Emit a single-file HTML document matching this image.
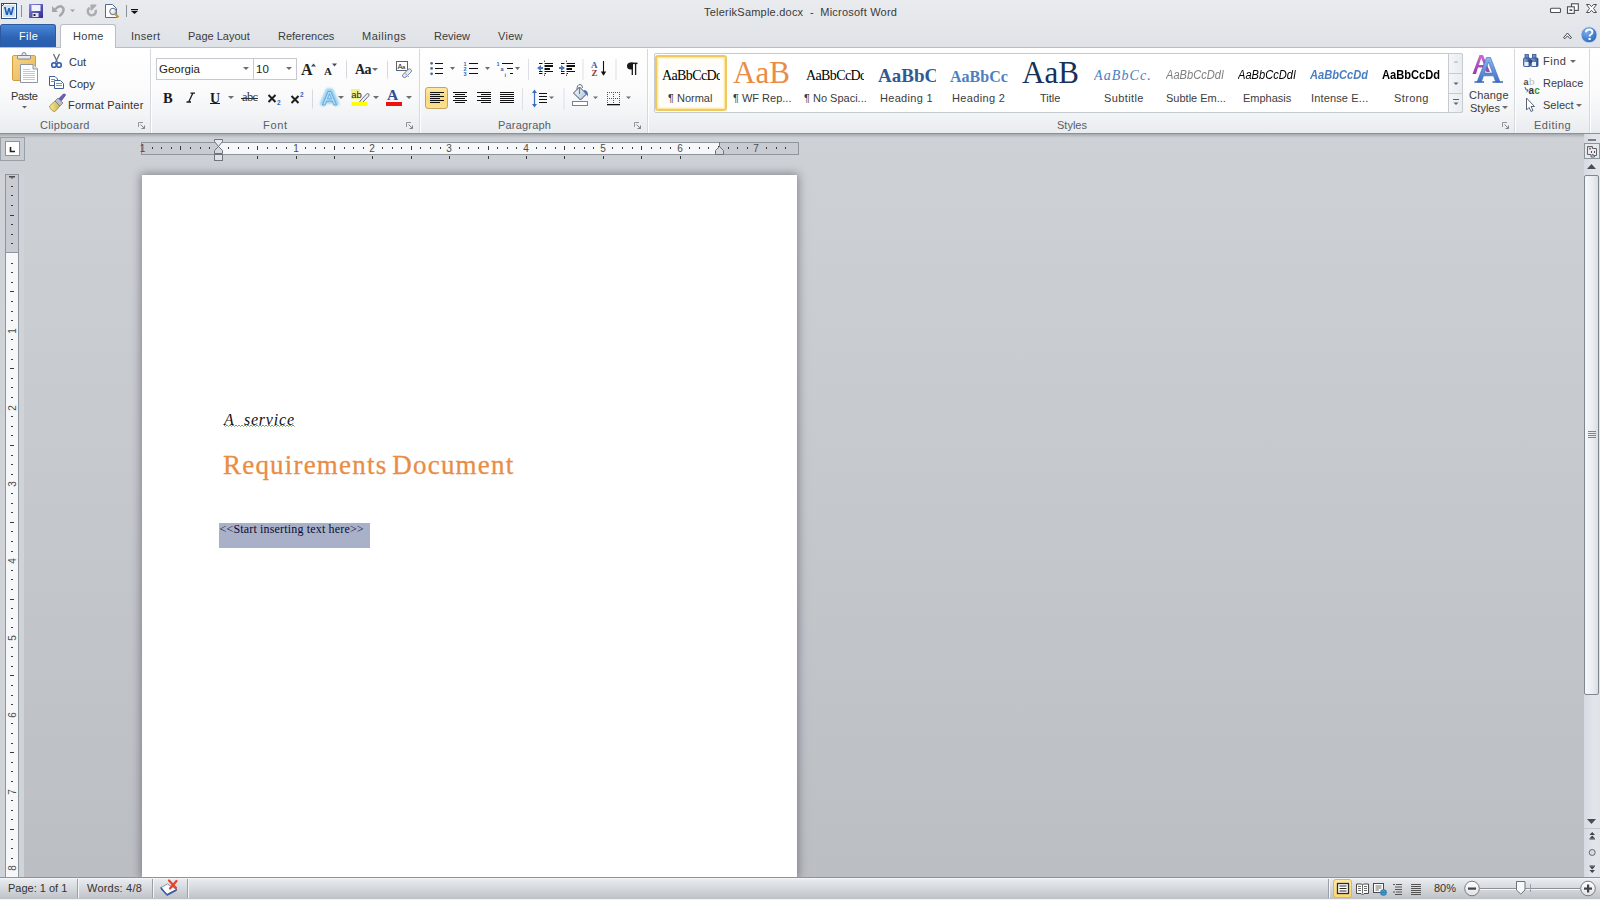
<!DOCTYPE html>
<html><head><meta charset="utf-8">
<style>
*{margin:0;padding:0;box-sizing:border-box}
html,body{width:1600px;height:900px;overflow:hidden;font-family:"Liberation Sans",sans-serif;font-size:11px;color:#3c3c3c;background:#c5c8cd}
.a{position:absolute}
svg{position:absolute;overflow:visible}
.t{position:absolute;white-space:pre;font-size:11px;line-height:13px;color:#3c3c3c}
#title{left:0;top:0;width:1600px;height:47px;background:linear-gradient(#e9ebef,#dfe2e6)}
#ribbon{left:0;top:47px;width:1600px;height:87px;background:linear-gradient(#ffffff 0%,#fbfbfc 50%,#f1f3f5 80%,#e9ecef 100%);border-top:1px solid #b9bec5;border-bottom:1px solid #8c9199;box-shadow:0 1px 0 #aeb3ba}
#doc{left:0;top:134px;width:1584px;height:744px;background:linear-gradient(#ced1d6,#bbbec3)}
#status{left:0;top:877px;width:1600px;height:23px;background:linear-gradient(#f5f7fa 0px,#e7e9ed 2px,#d4d7db 11px,#c0c3c7 20px,#bfc2c6 21px,#f2f3f4 21px);border-top:1px solid #8f949b}
#page{left:142px;top:175px;width:655px;height:703px;background:#fff;box-shadow:0 0 9px 1px rgba(60,65,75,.55)}
#vscroll{left:1584px;top:134px;width:16px;height:744px;background:#dde1e6}
.tab{top:24px;height:23px}
.sep{position:absolute;width:1px;background:linear-gradient(rgba(200,204,210,0),#d5d9de 15%,#d5d9de 85%,rgba(200,204,210,0))}
.gsep{position:absolute;top:49px;height:84px;width:2px;border-left:1px solid #d5d9de;border-right:1px solid #ffffff}
.lbl{position:absolute;white-space:pre;font-size:11px;line-height:13px;color:#575d69}
.dd{position:absolute;width:0;height:0;border-left:3px solid transparent;border-right:3px solid transparent;border-top:3px solid #6d6d6d}
.pv{position:absolute;white-space:pre;overflow:hidden;line-height:18px}
</style></head><body>
<!-- TITLE BAR -->
<div id="title" class="a"></div>
<div class="t" style="left:704px;top:6px;color:#3a3a3a;letter-spacing:0.22px">TelerikSample.docx  -  Microsoft Word</div>
<!-- QAT -->
<svg style="left:0;top:0" width="150" height="24">
 <rect x="1.5" y="3.5" width="15" height="15" fill="#fff" stroke="#2b4c7e"/>
 <path d="M1.5 6.5 L4.5 3.5" stroke="#2b4c7e" fill="none"/>
 <rect x="3" y="5" width="12" height="12" fill="#cfe0f5"/>
 <path d="M4 7 L6 15 L8 15 L9 10.5 L10 15 L12 15 L14 7 L12.3 7 L11 12.5 L9.8 8 L8.2 8 L7 12.5 L5.7 7 Z" fill="#1a5fb4"/>
 <rect x="21" y="5" width="1" height="12" fill="#8d9299"/>
 <rect x="29" y="4" width="14" height="14" fill="#4a48b8"/>
 <rect x="29" y="4" width="14" height="14" fill="url(#sv)"/>
 <rect x="31.5" y="5" width="9" height="6" fill="#f2f4fb"/>
 <rect x="32.5" y="13" width="6" height="4" fill="#e8e8f4"/>
 <rect x="33.5" y="14" width="2" height="2" fill="#222"/>
 <defs><linearGradient id="sv" x1="0" y1="0" x2="1" y2="1"><stop offset="0" stop-color="#8a88e0"/><stop offset="1" stop-color="#2f2a90"/></linearGradient>
 <radialGradient id="mg" cx=".4" cy=".35" r=".6"><stop offset="0" stop-color="#fff"/><stop offset="1" stop-color="#c9d3e3"/></radialGradient></defs>
 <path d="M52 6 L52 12 L58 12 Z" fill="#a3a6ab"/><path d="M55 9.5 Q58.5 5.5 61.5 6.5 Q64.5 8 63.2 11.5 Q62 14.5 59.3 16.3" fill="none" stroke="#a3a6ab" stroke-width="2.4"/>
 <path d="M70 9.5 L75 9.5 L72.5 12 Z" fill="#9a9ea5"/>
 <path d="M89.80 7.84 A4.0 4.0 0 1 0 95.56 9.93" fill="none" stroke="#a9acb1" stroke-width="2.5"/>
 <path d="M90.5 4.6 L96.3 4.6 L96.3 5.8 L91.7 10.4 L90.5 10.4 Z" fill="#a9acb1"/>
 <path d="M105.5 4.5 L112.5 4.5 L116.5 8.5 L116.5 17.5 L105.5 17.5 Z" fill="#fff" stroke="#4e6c90"/>
 <circle cx="113" cy="11.5" r="3.3" fill="url(#mg)" stroke="#6b7480" stroke-width="1"/>
 <path d="M115.2 14 L118.5 17.3" stroke="#c79a3c" stroke-width="2.4"/>
 <rect x="126" y="5" width="1" height="12" fill="#8d9299"/>
 <rect x="131" y="9" width="7" height="1.2" fill="#111"/>
 <path d="M131 11 L138 11 L134.5 14 Z" fill="#111"/>
</svg>
<!-- WINDOW CONTROLS -->
<svg style="left:1540px;top:0" width="60" height="48">
 <rect x="10.5" y="8.3" width="10" height="4.2" rx="1" fill="#fff" stroke="#4b4f56" stroke-width="1.1"/>
 <rect x="31.5" y="3.8" width="6.8" height="6.6" fill="#fff" stroke="#4b4f56" stroke-width="1.1"/>
 <rect x="27.5" y="6.8" width="6.8" height="6.6" fill="#fff" stroke="#4b4f56" stroke-width="1.1"/>
 <rect x="29.5" y="9.3" width="2.8" height="1.6" fill="#4b4f56"/>
 <path d="M46.5 4.5 L49.5 4.5 L51.5 6.7 L53.5 4.5 L56.5 4.5 L53.5 8.5 L56.5 12.5 L53.5 12.5 L51.5 10.3 L49.5 12.5 L46.5 12.5 L49.5 8.5 Z" fill="#fff" stroke="#4b4f56" stroke-width="1" stroke-linejoin="round"/>
 <path d="M23.5 37.7 L27.5 33 L31.5 37.7 L30 38.7 L27.5 35.8 L25 38.7 Z" fill="#fff" stroke="#3f434a" stroke-width="1" stroke-linejoin="round"/>
 <defs><radialGradient id="hg" cx=".35" cy=".3" r=".75"><stop offset="0" stop-color="#7fb0ea"/><stop offset="1" stop-color="#2a66bd"/></radialGradient></defs>
 <circle cx="49" cy="34.8" r="8" fill="url(#hg)" stroke="#d8e6f7" stroke-width="0.8"/>
 <path d="M46 32.3 Q46 29.5 49.2 29.5 Q52.4 29.5 52.4 32.2 Q52.4 34 50.3 35 Q49.6 35.4 49.6 36.6" fill="none" stroke="#fff" stroke-width="1.9"/>
 <rect x="48.5" y="38" width="2.2" height="2" fill="#fff"/>
</svg>

<!-- TABS -->
<div class="a tab" style="left:0;width:56px;background:linear-gradient(#4a87d6,#2c62b4 60%,#2a5dab);border:1px solid #2c5aa0;border-bottom:none;border-radius:3px 3px 0 0"></div>
<div class="t" style="left:19px;top:30px;color:#fff;letter-spacing:0.4px">File</div>
<div class="a tab" style="left:60px;width:56px;background:linear-gradient(#fdfdfd,#ffffff);border:1px solid #b9bec5;border-bottom:none;border-radius:3px 3px 0 0;height:24px"></div>
<div class="t" style="left:73px;top:30px;letter-spacing:0.35px">Home</div>
<div class="t" style="left:131px;top:30px;letter-spacing:0.3px">Insert</div>
<div class="t" style="left:188px;top:30px">Page Layout</div>
<div class="t" style="left:278px;top:30px">References</div>
<div class="t" style="left:362px;top:30px;letter-spacing:0.5px">Mailings</div>
<div class="t" style="left:434px;top:30px">Review</div>
<div class="t" style="left:498px;top:30px;letter-spacing:0.3px">View</div>

<!-- RIBBON -->
<div id="ribbon" class="a"></div>
<div class="a" style="left:61px;top:46px;width:54px;height:2px;background:#fff"></div>
<div class="gsep" style="left:150px"></div>
<div class="gsep" style="left:419px"></div>
<div class="gsep" style="left:647px"></div>
<div class="gsep" style="left:1514px"></div>
<div class="gsep" style="left:1589px"></div>
<div class="lbl" style="left:40px;top:119px;letter-spacing:0.3px">Clipboard</div>
<div class="lbl" style="left:263px;top:119px;letter-spacing:0.7px">Font</div>
<div class="lbl" style="left:498px;top:119px;letter-spacing:0.2px">Paragraph</div>
<div class="lbl" style="left:1057px;top:119px">Styles</div>
<div class="lbl" style="left:1534px;top:119px;letter-spacing:0.5px">Editing</div>


<!-- CLIPBOARD GROUP -->
<svg style="left:0;top:47px" width="150" height="87">
 <defs>
  <linearGradient id="cbg" x1="0" y1="0" x2="1" y2="1"><stop offset="0" stop-color="#f7d58c"/><stop offset="1" stop-color="#e9b551"/></linearGradient>
  <linearGradient id="brs" x1="0" y1="0" x2="1" y2="0"><stop offset="0" stop-color="#f4ec9a"/><stop offset="1" stop-color="#c9b04c"/></linearGradient>
 </defs>
 <rect x="12.5" y="8.5" width="23" height="25" rx="1.5" fill="url(#cbg)" stroke="#d19e3c"/>
 <circle cx="24" cy="7.5" r="2" fill="#e9ebee" stroke="#7d848c"/>
 <rect x="17.5" y="8.5" width="13" height="3.5" rx="1" fill="#e9ebee" stroke="#7d848c"/>
 <path d="M20.5 17.5 L33 17.5 L37.5 22 L37.5 35.5 L20.5 35.5 Z" fill="#fff" stroke="#8f959c"/>
 <path d="M33 17.5 L33 22 L37.5 22" fill="#e4e7eb" stroke="#8f959c"/>
 <g stroke="#c5c9ce" stroke-width="1"><path d="M23 22.5 H30 M23 24.5 H35 M23 26.5 H35 M23 28.5 H35 M23 30.5 H35 M23 32.5 H35"/></g>
 <path d="M22 59 L27 59 L24.5 61.5 Z" fill="#5f6368"/>
 <!-- scissors -->
 <path d="M53.5 7 L57.5 15.5 M59.5 7 L55.5 15.5" stroke="#6a6f76" stroke-width="1.3"/>
 <circle cx="54" cy="18" r="2.3" fill="none" stroke="#2f5fb3" stroke-width="1.6"/>
 <circle cx="59" cy="18" r="2.3" fill="none" stroke="#2f5fb3" stroke-width="1.6"/>
 <!-- copy -->
 <path d="M49.5 29.5 L55 29.5 L57.5 32 L57.5 38.5 L49.5 38.5 Z" fill="#fff" stroke="#3e5f95"/>
 <path d="M54.5 33.5 L60.5 33.5 L63.5 36.5 L63.5 41.5 L54.5 41.5 Z" fill="#fff" stroke="#3e5f95"/>
 <path d="M51 32.5 H55 M51 34.5 H55 M56 36.5 H62 M56 38.5 H62" stroke="#6f93cc"/>
 <!-- format painter -->
 <path d="M49.5 59 L55 54 L60 59 L55 64.5 Q53 64.5 51.5 63 Q50 61.5 49.5 59 Z" fill="url(#brs)" stroke="#a08c3a" stroke-width="0.8"/>
 <path d="M55 54 L58 51 L63 56 L60 59 Z" fill="#b9bfca" stroke="#6b6f7a" stroke-width="0.7"/>
 <path d="M59 51.5 L63.5 47 Q65 46.5 65.5 48 L61.5 53.5 Z" fill="#6a62b8" stroke="#4a4290" stroke-width="0.8"/>
</svg>
<div class="t" style="left:11px;top:90px;color:#333;letter-spacing:-0.3px">Paste</div>
<div class="t" style="left:69px;top:56px;color:#333">Cut</div>
<div class="t" style="left:69px;top:78px;color:#333">Copy</div>
<div class="t" style="left:68px;top:99px;color:#333;letter-spacing:0.2px">Format Painter</div>
<svg style="left:138px;top:122px" width="8" height="8"><path d="M0.5 0.5 H5 M0.5 0.5 V5" stroke="#8f949b" fill="none"/><path d="M2.5 2.5 L6.5 6.5 M6.5 3.5 V6.5 H3.5" stroke="#7f848b" fill="none"/></svg>


<!-- FONT GROUP -->
<div class="a" style="left:156px;top:58px;width:98px;height:22px;background:#fff;border:1px solid #c6cacf"></div>
<div class="a" style="left:253px;top:58px;width:44px;height:22px;background:#fff;border:1px solid #c6cacf"></div>
<div class="t" style="left:159px;top:63px;color:#222;font-size:11.5px">Georgia</div>
<div class="t" style="left:256px;top:63px;color:#222;font-size:11.5px">10</div>
<div class="dd" style="left:243px;top:67px"></div>
<div class="dd" style="left:286px;top:67px"></div>
<div class="a" style="left:301px;top:61px;font-family:'Liberation Serif';font-weight:bold;font-size:16px;line-height:18px;color:#222">A</div>
<svg style="left:310px;top:63px" width="8" height="4"><path d="M1 3.5 L3.5 0.5 L6 3.5 Z" fill="#3c4a6e"/></svg>
<div class="a" style="left:324px;top:65px;font-family:'Liberation Serif';font-weight:bold;font-size:11px;line-height:13px;color:#222">A</div>
<svg style="left:331px;top:63px" width="8" height="5"><path d="M1 0.5 L6 0.5 L3.5 3.5 Z" fill="#3c4a6e"/></svg>
<div class="sep" style="left:346px;top:59px;height:21px"></div>
<div class="a" style="left:355px;top:62px;font-family:'Liberation Serif';font-weight:bold;font-size:14px;line-height:16px;color:#222;letter-spacing:-0.5px">Aa</div>
<div class="dd" style="left:372px;top:68px"></div>
<div class="sep" style="left:387px;top:59px;height:21px"></div>
<svg style="left:395px;top:60px" width="20" height="20">
 <rect x="1.5" y="1.5" width="11" height="9" fill="#fff" stroke="#5a6270"/>
 <text x="2.6" y="9" font-family="Liberation Sans" font-size="7.5" fill="#222">A</text><text x="7" y="9" font-family="Liberation Sans" font-size="6" fill="#222">a</text>
 <path d="M8 14.5 L13 9.5 Q14.8 8.2 16 9.5 Q17.2 10.8 16 12.2 L11 17 Q9.2 18.2 8 17 Q6.8 15.8 8 14.5 Z" fill="#e4e9f1" stroke="#7a8595"/>
 <path d="M9.5 13 L14 17" stroke="#9aa4b3"/>
</svg>
<!-- row 2 -->
<div class="a" style="left:163px;top:90px;font-family:'Liberation Serif';font-weight:bold;font-size:14.5px;line-height:17px;color:#1a1a1a">B</div>
<svg style="left:185px;top:92px" width="12" height="12"><path d="M5.5 1.2 H10 M1.5 10 H6 M7.8 1.2 L3.7 10" stroke="#1a1a1a" stroke-width="1.3" fill="none"/></svg>
<div class="a" style="left:210px;top:89.5px;font-family:'Liberation Serif';font-weight:bold;font-size:14px;line-height:17px;color:#1a1a1a">U</div>
<div class="a" style="left:210px;top:103px;width:10px;height:1px;background:#1a1a1a"></div>
<div class="dd" style="left:228px;top:96px"></div>
<div class="a" style="left:242px;top:90px;font-family:'Liberation Serif';font-size:12.5px;line-height:14px;color:#333;letter-spacing:-0.6px">abc</div>
<div class="a" style="left:241px;top:98px;width:17px;height:1px;background:#333"></div>
<svg style="left:266px;top:92px" width="18" height="14"><path d="M2.5 3 L9.5 10 M9.5 3 L2.5 10" stroke="#1e1e1e" stroke-width="2"/><text x="11" y="12.5" font-family="Liberation Sans" font-weight="bold" font-size="6.5" fill="#3d63b8">2</text></svg>
<svg style="left:289px;top:91px" width="18" height="14"><path d="M2.5 5 L9.5 12 M9.5 5 L2.5 12" stroke="#1e1e1e" stroke-width="2"/><text x="11" y="6" font-family="Liberation Sans" font-weight="bold" font-size="6.5" fill="#3d63b8">2</text></svg>
<div class="sep" style="left:312px;top:88px;height:22px"></div>
<svg style="left:318px;top:87px" width="22" height="22">
 <defs><filter id="glw" x="-50%" y="-50%" width="200%" height="200%"><feGaussianBlur stdDeviation="1.2"/></filter></defs>
 <path d="M4 18.5 L10 4 L13 4 L19 18.5 M8 14 H15" fill="none" stroke="#8fd0f0" stroke-width="5" filter="url(#glw)"/>
 <path d="M4.5 18 L10.2 4.5 L12.8 4.5 L18.5 18 L15.8 18 L14.3 14 L8.7 14 L7.2 18 Z M9.5 11.8 L13.5 11.8 L11.5 6.8 Z" fill="#b5def4" stroke="#5a9ad4" stroke-width="0.8"/>
</svg>
<div class="dd" style="left:338px;top:96px"></div>
<svg style="left:350px;top:88px" width="20" height="20">
 <rect x="1" y="1" width="9" height="10" fill="#f1f18a"/>
 <text x="1.2" y="9.5" font-family="Liberation Sans" font-size="9.5" fill="#222">ab</text>
 <path d="M10 13 L16.5 6 Q17.8 5 18.8 6 Q19.6 7 18.6 8.2 L12 15 L9.5 15.5 Z" fill="#e4ebf5" stroke="#59657a" stroke-width="0.9"/>
 <rect x="1.5" y="14" width="16" height="4" fill="#ffff00"/>
</svg>
<div class="dd" style="left:373px;top:96px"></div>
<div class="a" style="left:387px;top:86px;font-family:'Liberation Serif';font-weight:bold;font-size:15.5px;line-height:17px;color:#2d4f93">A</div>
<div class="a" style="left:386px;top:102px;width:16px;height:4px;background:#ee1111"></div>
<div class="dd" style="left:406px;top:96px"></div>
<svg style="left:406px;top:122px" width="8" height="8"><path d="M0.5 0.5 H5 M0.5 0.5 V5" stroke="#8f949b" fill="none"/><path d="M2.5 2.5 L6.5 6.5 M6.5 3.5 V6.5 H3.5" stroke="#7f848b" fill="none"/></svg>


<!-- PARAGRAPH GROUP -->
<svg style="left:420px;top:47px" width="228" height="87">
 <defs>
  <linearGradient id="selg" x1="0" y1="0" x2="0" y2="1"><stop offset="0" stop-color="#fde9a6"/><stop offset="0.5" stop-color="#fcd97c"/><stop offset="1" stop-color="#fce08e"/></linearGradient>
 </defs>
 <!-- bullets -->
 <g fill="#4e6a9c"><circle cx="11.6" cy="16.3" r="1.4"/><circle cx="11.6" cy="21.4" r="1.4"/><circle cx="11.6" cy="26.8" r="1.4"/></g>
 <path d="M15 16.5 H23 M15 21.5 H23 M15 26.5 H23" stroke="#111" stroke-width="1.2"/>
 <path d="M30 20 L35 20 L32.5 23 Z" fill="#6d6d6d"/>
 <!-- numbering -->
 <g font-family="Liberation Sans" font-weight="bold" font-size="5.5" fill="#3d63b8"><text x="43.5" y="19">1</text><text x="43.5" y="24">2</text><text x="43.5" y="29">3</text></g>
 <path d="M49 16.5 H58 M49 21.5 H58 M49 26.5 H58" stroke="#111" stroke-width="1.2"/>
 <path d="M65 20 L70 20 L67.5 23 Z" fill="#6d6d6d"/>
 <!-- multilevel -->
 <g font-family="Liberation Sans" font-weight="bold" font-size="5.5" fill="#3d63b8"><text x="76.5" y="19">1</text><text x="80.5" y="24">a</text><text x="84.5" y="29.5">i</text></g>
 <path d="M82 16.5 H93 M87 21.5 H93 M90 26.5 H93" stroke="#111" stroke-width="1.2"/>
 <path d="M95 20 L100 20 L97.5 23 Z" fill="#6d6d6d"/>
 <!-- decrease indent -->
 <g stroke="#111"><path d="M119 16.5 H122.5 M119 24.5 H122.5 M119 26.5 H122.5 M124.5 16.5 H133 M124.5 24.5 H133 M124.5 26.5 H126" stroke-width="1"/>
 <path d="M124.5 19 H133 M124.5 22 H130" stroke-width="1.8"/></g>
 <g fill="#111"><rect x="124" y="13.7" width="1" height="1"/><rect x="124" y="27.7" width="1" height="1"/></g>
 <path d="M117 21 L121 18 L121 20 L123 20 L123 22 L121 22 L121 24 Z" fill="#4a78c2"/>
 <!-- increase indent -->
 <g stroke="#111"><path d="M141 16.5 H144.5 M141 24.5 H144.5 M141 26.5 H144.5 M146.5 16.5 H155 M146.5 24.5 H155 M146.5 26.5 H148" stroke-width="1"/>
 <path d="M146.5 19 H155 M146.5 22 H152" stroke-width="1.8"/></g>
 <g fill="#111"><rect x="146" y="13.7" width="1" height="1"/><rect x="146" y="27.7" width="1" height="1"/></g>
 <path d="M145 21 L141 18 L141 20 L139 20 L139 22 L141 22 L141 24 Z" fill="#4a78c2"/>
 <rect x="108" y="12" width="1" height="21" fill="#dcdfe3"/>
 <rect x="162.5" y="12" width="1" height="21" fill="#dcdfe3"/>
 <!-- sort -->
 <text x="171" y="20.5" font-family="Liberation Serif" font-weight="bold" font-size="9" fill="#3a63a8">A</text>
 <text x="171.5" y="28.8" font-family="Liberation Serif" font-weight="bold" font-size="9" fill="#8f3a34">Z</text>
 <path d="M183.5 14 V27.5" stroke="#111" stroke-width="1.1"/>
 <path d="M180.8 24.5 L183.5 28.8 L186.2 24.5 Z" fill="#111"/>
 <rect x="195.5" y="12" width="1" height="21" fill="#dcdfe3"/>
 <!-- pilcrow -->
 <path d="M212.3 16.5 V28 M215.6 16.5 V28" stroke="#1a1a1a" stroke-width="1.3"/>
 <rect x="210.5" y="15.6" width="7" height="1.5" fill="#1a1a1a"/>
 <path d="M212.8 15.6 H210.8 Q207 15.6 207 19.1 Q207 22.6 210.8 22.6 H212.8 Z" fill="#1a1a1a"/>
 <!-- align row -->
 <rect x="5.5" y="40.5" width="22" height="21" rx="2.5" fill="url(#selg)" stroke="#c4a463"/>
 <path d="M10 45.5 H24 M10 47.5 H20 M10 49.5 H24 M10 51.5 H20 M10 53.5 H24 M10 55.5 H20" stroke="#111" stroke-width="1"/>
 <path d="M33 45.5 H47 M35 47.5 H45 M33 49.5 H47 M35 51.5 H45 M33 53.5 H47 M35 55.5 H45" stroke="#111" stroke-width="1"/>
 <path d="M57 45.5 H71 M61 47.5 H71 M57 49.5 H71 M61 51.5 H71 M57 53.5 H71 M61 55.5 H71" stroke="#111" stroke-width="1"/>
 <path d="M80 45.5 H94 M80 47.5 H94 M80 49.5 H94 M80 51.5 H94 M80 53.5 H94 M80 55.5 H94" stroke="#111" stroke-width="1"/>
 <rect x="102" y="41" width="1" height="22" fill="#dcdfe3"/>
 <!-- line spacing -->
 <path d="M114.5 45 V58" stroke="#3a6cc0" stroke-width="1.2"/>
 <path d="M112 46 L114.5 42.5 L117 46 Z M112 57 L114.5 60.5 L117 57 Z" fill="#3a6cc0"/>
 <path d="M119 46.5 H127 M119 49.5 H127 M119 52.5 H127 M119 55.5 H127" stroke="#111" stroke-width="1.2"/>
 <path d="M129 49.5 L134 49.5 L131.5 52 Z" fill="#6d6d6d"/>
 <rect x="143.5" y="41" width="1" height="22" fill="#dcdfe3"/>
 <!-- shading -->
 <defs><linearGradient id="bk" x1="0" y1="0" x2="1" y2="1"><stop offset="0" stop-color="#ffffff"/><stop offset="1" stop-color="#a9bfdf"/></linearGradient></defs>
 <rect x="152.5" y="54.5" width="15" height="4" fill="#fff" stroke="#7d8289"/>
 <path d="M153.5 46 L159.5 40 L166.5 47 L160.5 53 Z" fill="url(#bk)" stroke="#3e4d66" stroke-width="1"/>
 <path d="M159.5 41 V47" stroke="#3e9a7a" stroke-width="1.2"/>
 <path d="M157 42.5 Q157 37.5 160 37.5 Q162.5 37.5 162.5 41" fill="none" stroke="#556070" stroke-width="0.9"/>
 <path d="M163.5 43 Q168.5 42.5 168 50 Q167 47 165.5 46.5 Z" fill="#3f6fc0"/>
 <path d="M173 49.5 L178 49.5 L175.5 52 Z" fill="#6d6d6d"/>
 <!-- borders -->
 <g fill="#555"><rect x="187" y="45" width="1" height="1"/><rect x="189" y="45" width="1" height="1"/><rect x="191" y="45" width="1" height="1"/><rect x="193" y="45" width="1" height="1"/><rect x="195" y="45" width="1" height="1"/><rect x="197" y="45" width="1" height="1"/><rect x="199" y="45" width="1" height="1"/>
 <rect x="187" y="47" width="1" height="1"/><rect x="187" y="49" width="1" height="1"/><rect x="187" y="51" width="1" height="1"/><rect x="187" y="53" width="1" height="1"/><rect x="187" y="55" width="1" height="1"/>
 <rect x="199" y="47" width="1" height="1"/><rect x="199" y="49" width="1" height="1"/><rect x="199" y="51" width="1" height="1"/><rect x="199" y="53" width="1" height="1"/><rect x="199" y="55" width="1" height="1"/>
 <rect x="193" y="47" width="1" height="1"/><rect x="193" y="49" width="1" height="1"/><rect x="193" y="53" width="1" height="1"/><rect x="193" y="55" width="1" height="1"/>
 <rect x="189" y="51" width="1" height="1"/><rect x="191" y="51" width="1" height="1"/><rect x="195" y="51" width="1" height="1"/><rect x="197" y="51" width="1" height="1"/><rect x="193" y="51" width="1" height="1"/></g>
 <rect x="187" y="57" width="13" height="1.3" fill="#111"/>
 <path d="M206 49.5 L211 49.5 L208.5 52 Z" fill="#6d6d6d"/>
</svg>
<svg style="left:634px;top:122px" width="8" height="8"><path d="M0.5 0.5 H5 M0.5 0.5 V5" stroke="#8f949b" fill="none"/><path d="M2.5 2.5 L6.5 6.5 M6.5 3.5 V6.5 H3.5" stroke="#7f848b" fill="none"/></svg>


<!-- STYLES GROUP -->
<div class="a" style="left:654px;top:53px;width:809px;height:60px;background:#fff;border:1px solid #c6cbd2;border-radius:2px"></div>
<div class="a" style="left:655px;top:55px;width:72px;height:56px;border:2px solid #efc960;border-radius:3px;background:#fffefa;box-shadow:inset 0 0 0 1px #fde9a2,inset 0 0 0 2px #fff6d6"></div>
<div class="pv" style="left:662px;top:67px;font-family:'Liberation Serif';font-size:14px;color:#000;width:58px;letter-spacing:-0.6px">AaBbCcDd</div>
<div class="t" style="left:668px;top:92px">¶ Normal</div>
<div class="pv" style="left:733px;top:55px;font-family:'Liberation Serif';font-size:31px;line-height:36px;color:#ea8c45;width:60px">AaB</div>
<div class="t" style="left:733px;top:92px">¶ WF Rep...</div>
<div class="pv" style="left:806px;top:67px;font-family:'Liberation Serif';font-size:14px;color:#000;width:58px;letter-spacing:-0.6px">AaBbCcDd</div>
<div class="t" style="left:804px;top:92px">¶ No Spaci...</div>
<div class="pv" style="left:878px;top:65px;font-family:'Liberation Serif';font-weight:bold;font-size:19px;line-height:22px;color:#2e5b93;width:58px">AaBbCc</div>
<div class="t" style="left:880px;top:92px;letter-spacing:0.3px">Heading 1</div>
<div class="pv" style="left:950px;top:68px;font-family:'Liberation Serif';font-weight:bold;font-size:16px;color:#4c7fc0;width:58px">AaBbCc</div>
<div class="t" style="left:952px;top:92px;letter-spacing:0.35px">Heading 2</div>
<div class="pv" style="left:1022px;top:55px;font-family:'Liberation Serif';font-size:31px;line-height:36px;color:#16325a;width:60px">AaB</div>
<div class="t" style="left:1040px;top:92px">Title</div>
<div class="pv" style="left:1094px;top:67px;font-family:'Liberation Serif';font-style:italic;font-size:14px;color:#4a7ec0;width:58px;letter-spacing:1.1px">AaBbCc.</div>
<div class="t" style="left:1104px;top:92px;letter-spacing:0.4px">Subtitle</div>
<div class="pv" style="left:1166px;top:66px;font-family:'Liberation Sans';font-style:italic;font-size:12.5px;color:#7f7f7f;width:65px;letter-spacing:0px;transform:scaleX(0.89);transform-origin:0 0">AaBbCcDdI</div>
<div class="t" style="left:1166px;top:92px">Subtle Em...</div>
<div class="pv" style="left:1238px;top:66px;font-family:'Liberation Sans';font-style:italic;font-size:12.5px;color:#000;width:65px;letter-spacing:0px;transform:scaleX(0.89);transform-origin:0 0">AaBbCcDdI</div>
<div class="t" style="left:1243px;top:92px">Emphasis</div>
<div class="pv" style="left:1310px;top:66px;font-family:'Liberation Sans';font-style:italic;font-weight:bold;font-size:12.5px;color:#4a7ec0;width:65px;letter-spacing:0px;transform:scaleX(0.89);transform-origin:0 0">AaBbCcDdI</div>
<div class="t" style="left:1311px;top:92px;letter-spacing:0.15px">Intense E...</div>
<div class="pv" style="left:1382px;top:66px;font-family:'Liberation Sans';font-weight:bold;font-size:12.5px;color:#000;width:65px;letter-spacing:0px;transform:scaleX(0.89);transform-origin:0 0">AaBbCcDdE</div>
<div class="t" style="left:1394px;top:92px;letter-spacing:0.4px">Strong</div>
<div class="a" style="left:1448px;top:53px;width:15px;height:60px;background:linear-gradient(90deg,#f4f5f7,#e9ecf0);border:1px solid #c6cbd2;border-radius:0 2px 2px 0"></div>
<div class="a" style="left:1448px;top:73px;width:15px;height:1px;background:#c6cbd2"></div>
<div class="a" style="left:1448px;top:93px;width:15px;height:1px;background:#c6cbd2"></div>
<svg style="left:1447.5px;top:53px" width="16" height="60">
 <path d="M5.5 10 L10.5 10 L8 7.5 Z" fill="#c2c5ca"/>
 <path d="M5.5 29.5 L10.5 29.5 L8 32 Z" fill="#5f6368"/>
 <path d="M5 46.5 H11" stroke="#5f6368"/><path d="M5.5 49.5 L10.5 49.5 L8 52 Z" fill="#5f6368"/>
</svg>
<svg style="left:1466px;top:52px" width="42" height="34">
 <defs><linearGradient id="pa" x1="0" y1="0" x2="0" y2="1"><stop offset="0" stop-color="#c86bd0"/><stop offset="1" stop-color="#9a3aa8"/></linearGradient>
 <linearGradient id="ba" x1="0" y1="0" x2="0" y2="1"><stop offset="0" stop-color="#8ab8f0"/><stop offset="1" stop-color="#3f73c8"/></linearGradient></defs>
 <path d="M6.5 22 L13.5 3 L17 3 L24 20 L20.5 20 L18.8 15.5 L12 15.5 L10 22 Z M12.8 13 L18 13 L15.3 6 Z" fill="url(#pa)"/>
 <path d="M11 30 L20.5 5.5 L24.5 5.5 L34 30 L29.8 30 L27.5 23.8 L17.5 23.8 L15.3 30 Z M18.5 21 L26.5 21 L22.5 10 Z" fill="url(#ba)" stroke="#3a68b5" stroke-width="0.6"/>
 <path d="M8.5 30 H18 M26.5 30 H37" stroke="#3a68b5" stroke-width="1.3"/>
</svg>
<div class="t" style="left:1469px;top:89px;letter-spacing:0.2px">Change</div>
<div class="t" style="left:1470px;top:102px">Styles</div>
<div class="dd" style="left:1502px;top:106px"></div>
<svg style="left:1502px;top:122px" width="8" height="8"><path d="M0.5 0.5 H5 M0.5 0.5 V5" stroke="#8f949b" fill="none"/><path d="M2.5 2.5 L6.5 6.5 M6.5 3.5 V6.5 H3.5" stroke="#7f848b" fill="none"/></svg>


<!-- EDITING GROUP -->
<svg style="left:1520px;top:52px" width="24" height="64">
 <defs><linearGradient id="bino" x1="0" y1="0" x2="1" y2="0"><stop offset="0" stop-color="#8fb0e0"/><stop offset="1" stop-color="#2c4f94"/></linearGradient></defs>
 <rect x="5" y="2.5" width="3.5" height="4" fill="#6b8cc8" stroke="#2d4a85" stroke-width="0.7"/>
 <rect x="12.5" y="2.5" width="3.5" height="4" fill="#6b8cc8" stroke="#2d4a85" stroke-width="0.7"/>
 <rect x="3.5" y="6" width="7" height="8.5" rx="1" fill="url(#bino)" stroke="#2d4a85" stroke-width="0.8"/>
 <rect x="11" y="6" width="7" height="8.5" rx="1" fill="url(#bino)" stroke="#2d4a85" stroke-width="0.8"/>
 <rect x="8.5" y="8" width="4" height="3" fill="#2d4a85"/>
 <rect x="4.5" y="10" width="4" height="4" fill="#e8eef8"/><rect x="12" y="10" width="4" height="4" fill="#e8eef8"/>
 <text x="3.5" y="33" font-family="Liberation Sans" font-weight="bold" font-size="9" fill="#4a4a4a">a</text>
 <text x="9" y="32.5" font-family="Liberation Serif" font-size="11" fill="#b4b7bb">b</text>
 <text x="8.5" y="41.5" font-family="Liberation Sans" font-weight="bold" font-size="10" fill="#333">a</text>
 <text x="14.3" y="41.5" font-family="Liberation Sans" font-weight="bold" font-size="10" fill="#2f9a2f">c</text>
 <path d="M5 35 Q5 38.5 8 38.5" fill="none" stroke="#3d63b8" stroke-width="1"/><path d="M6.5 37 L8.3 38.5 L6.5 40" fill="none" stroke="#3d63b8" stroke-width="1"/>
 <path d="M6.5 46 L6.5 58 L9 55.5 L11 59.5 L13 58.5 L11 54.5 L14.5 54.5 Z" fill="#fff" stroke="#4a5566" stroke-width="0.9" stroke-linejoin="round"/>
</svg>
<div class="t" style="left:1543px;top:55px;letter-spacing:0.5px">Find</div>
<div class="dd" style="left:1570px;top:60px"></div>
<div class="t" style="left:1543px;top:77px">Replace</div>
<div class="t" style="left:1543px;top:99px">Select</div>
<div class="dd" style="left:1576px;top:104px"></div>

<!-- DOC AREA -->
<div id="doc" class="a"></div>
<div class="a" style="left:0;top:134px;width:1600px;height:4px;background:linear-gradient(rgba(150,154,160,.75),rgba(170,174,180,.45) 50%,rgba(200,204,210,0))"></div>
<!-- H RULER -->
<div class="a" style="left:141px;top:142px;width:658px;height:13px;background:#c8ccd2;border:1px solid #8f959d"></div>
<div class="a" style="left:219px;top:143px;width:500px;height:11px;background:#f6f7f8"></div>
<svg style="left:0;top:134px" width="800" height="30">
<rect x="152" y="13" width="1" height="2" fill="#3a3a3a"/>
<rect x="161" y="13" width="1" height="2" fill="#3a3a3a"/>
<rect x="171" y="13" width="1" height="2" fill="#3a3a3a"/>
<rect x="180" y="12" width="1" height="4" fill="#3a3a3a"/>
<rect x="190" y="13" width="1" height="2" fill="#3a3a3a"/>
<rect x="200" y="13" width="1" height="2" fill="#3a3a3a"/>
<rect x="209" y="13" width="1" height="2" fill="#3a3a3a"/>
<rect x="228" y="13" width="1" height="2" fill="#3a3a3a"/>
<rect x="238" y="13" width="1" height="2" fill="#3a3a3a"/>
<rect x="248" y="13" width="1" height="2" fill="#3a3a3a"/>
<rect x="257" y="12" width="1" height="4" fill="#3a3a3a"/>
<rect x="267" y="13" width="1" height="2" fill="#3a3a3a"/>
<rect x="276" y="13" width="1" height="2" fill="#3a3a3a"/>
<rect x="286" y="13" width="1" height="2" fill="#3a3a3a"/>
<text x="296" y="17.5" text-anchor="middle" font-family="Liberation Sans" font-size="10" fill="#4a4a4a">1</text>
<rect x="305" y="13" width="1" height="2" fill="#3a3a3a"/>
<rect x="315" y="13" width="1" height="2" fill="#3a3a3a"/>
<rect x="324" y="13" width="1" height="2" fill="#3a3a3a"/>
<rect x="334" y="12" width="1" height="4" fill="#3a3a3a"/>
<rect x="344" y="13" width="1" height="2" fill="#3a3a3a"/>
<rect x="353" y="13" width="1" height="2" fill="#3a3a3a"/>
<rect x="363" y="13" width="1" height="2" fill="#3a3a3a"/>
<text x="372" y="17.5" text-anchor="middle" font-family="Liberation Sans" font-size="10" fill="#4a4a4a">2</text>
<rect x="382" y="13" width="1" height="2" fill="#3a3a3a"/>
<rect x="392" y="13" width="1" height="2" fill="#3a3a3a"/>
<rect x="401" y="13" width="1" height="2" fill="#3a3a3a"/>
<rect x="411" y="12" width="1" height="4" fill="#3a3a3a"/>
<rect x="420" y="13" width="1" height="2" fill="#3a3a3a"/>
<rect x="430" y="13" width="1" height="2" fill="#3a3a3a"/>
<rect x="440" y="13" width="1" height="2" fill="#3a3a3a"/>
<text x="449" y="17.5" text-anchor="middle" font-family="Liberation Sans" font-size="10" fill="#4a4a4a">3</text>
<rect x="459" y="13" width="1" height="2" fill="#3a3a3a"/>
<rect x="468" y="13" width="1" height="2" fill="#3a3a3a"/>
<rect x="478" y="13" width="1" height="2" fill="#3a3a3a"/>
<rect x="488" y="12" width="1" height="4" fill="#3a3a3a"/>
<rect x="497" y="13" width="1" height="2" fill="#3a3a3a"/>
<rect x="507" y="13" width="1" height="2" fill="#3a3a3a"/>
<rect x="516" y="13" width="1" height="2" fill="#3a3a3a"/>
<text x="526" y="17.5" text-anchor="middle" font-family="Liberation Sans" font-size="10" fill="#4a4a4a">4</text>
<rect x="536" y="13" width="1" height="2" fill="#3a3a3a"/>
<rect x="545" y="13" width="1" height="2" fill="#3a3a3a"/>
<rect x="555" y="13" width="1" height="2" fill="#3a3a3a"/>
<rect x="564" y="12" width="1" height="4" fill="#3a3a3a"/>
<rect x="574" y="13" width="1" height="2" fill="#3a3a3a"/>
<rect x="584" y="13" width="1" height="2" fill="#3a3a3a"/>
<rect x="593" y="13" width="1" height="2" fill="#3a3a3a"/>
<text x="603" y="17.5" text-anchor="middle" font-family="Liberation Sans" font-size="10" fill="#4a4a4a">5</text>
<rect x="612" y="13" width="1" height="2" fill="#3a3a3a"/>
<rect x="622" y="13" width="1" height="2" fill="#3a3a3a"/>
<rect x="632" y="13" width="1" height="2" fill="#3a3a3a"/>
<rect x="641" y="12" width="1" height="4" fill="#3a3a3a"/>
<rect x="651" y="13" width="1" height="2" fill="#3a3a3a"/>
<rect x="660" y="13" width="1" height="2" fill="#3a3a3a"/>
<rect x="670" y="13" width="1" height="2" fill="#3a3a3a"/>
<text x="680" y="17.5" text-anchor="middle" font-family="Liberation Sans" font-size="10" fill="#4a4a4a">6</text>
<rect x="689" y="13" width="1" height="2" fill="#3a3a3a"/>
<rect x="699" y="13" width="1" height="2" fill="#3a3a3a"/>
<rect x="708" y="13" width="1" height="2" fill="#3a3a3a"/>
<rect x="718" y="12" width="1" height="4" fill="#3a3a3a"/>
<rect x="728" y="13" width="1" height="2" fill="#3a3a3a"/>
<rect x="737" y="13" width="1" height="2" fill="#3a3a3a"/>
<rect x="747" y="13" width="1" height="2" fill="#3a3a3a"/>
<text x="756" y="17.5" text-anchor="middle" font-family="Liberation Sans" font-size="10" fill="#4a4a4a">7</text>
<rect x="766" y="13" width="1" height="2" fill="#3a3a3a"/>
<rect x="776" y="13" width="1" height="2" fill="#3a3a3a"/>
<rect x="785" y="13" width="1" height="2" fill="#3a3a3a"/>

<rect x="257" y="22" width="1" height="3" fill="#3a3a3a"/>
<rect x="296" y="22" width="1" height="3" fill="#3a3a3a"/>
<rect x="334" y="22" width="1" height="3" fill="#3a3a3a"/>
<rect x="372" y="22" width="1" height="3" fill="#3a3a3a"/>
<rect x="411" y="22" width="1" height="3" fill="#3a3a3a"/>
<rect x="449" y="22" width="1" height="3" fill="#3a3a3a"/>
<rect x="488" y="22" width="1" height="3" fill="#3a3a3a"/>
<rect x="526" y="22" width="1" height="3" fill="#3a3a3a"/>
<rect x="564" y="22" width="1" height="3" fill="#3a3a3a"/>
<rect x="603" y="22" width="1" height="3" fill="#3a3a3a"/>
<rect x="641" y="22" width="1" height="3" fill="#3a3a3a"/>
<rect x="680" y="22" width="1" height="3" fill="#3a3a3a"/>

<text x="142.5" y="17.5" text-anchor="middle" font-family="Liberation Sans" font-size="10" fill="#4a4a4a">1</text>
<path d="M214.5 5.5 H222.5 V7.5 L218.5 12.5 L214.5 7.5 Z" fill="#e9ebee" stroke="#6f757d"/>
<path d="M214.5 19.5 V16.5 L218.5 12.5 L222.5 16.5 V19.5 Z" fill="#d5d8dc" stroke="#6f757d"/>
<rect x="214.5" y="20.5" width="8" height="6" fill="#dfe2e5" stroke="#6f757d"/>
<path d="M715.5 20.5 V16.5 L719.5 12.5 L723.5 16.5 V20.5 Z" fill="#d5d8dc" stroke="#6f757d"/>
<rect x="719" y="8" width="1" height="5" fill="#6f757d"/>
</svg>
<div class="a" style="left:0;top:137px;width:25px;height:24px;border:1px solid #9aa0a8;background:#c9cdd2"></div>
<div class="a" style="left:5px;top:141px;width:15px;height:15px;border:1px solid #8d939b;background:#fff"></div>
<svg style="left:0;top:137px" width="25" height="24"><path d="M10.5 10 V14.5 H15" fill="none" stroke="#222" stroke-width="1.6"/></svg>
<!-- V RULER -->
<div class="a" style="left:0;top:174px;width:5px;height:704px;background:linear-gradient(#cfd2d7,#d0d3d8)"></div>
<div class="a" style="left:19px;top:174px;width:5px;height:704px;background:linear-gradient(#cfd2d7,#d0d3d8)"></div>
<div class="a" style="left:5px;top:174px;width:14px;height:704px;background:#f6f7f8;border-left:1px solid #8f959d;border-right:1px solid #8f959d;border-top:1px solid #8f959d"></div>
<div class="a" style="left:6px;top:175px;width:12px;height:78px;background:#c8ccd2;border-bottom:1px solid #8f959d"></div>
<svg style="left:0;top:0" width="24" height="900">
<rect x="11" y="186" width="2" height="1" fill="#3a3a3a"/><rect x="9" y="176" width="6" height="1.5" fill="#4a4a4a"/><rect x="11.5" y="176" width="1" height="3" fill="#4a4a4a"/>
<rect x="11" y="195" width="2" height="1" fill="#3a3a3a"/>
<rect x="11" y="205" width="2" height="1" fill="#3a3a3a"/>
<rect x="10" y="215" width="4" height="1" fill="#3a3a3a"/>
<rect x="11" y="224" width="2" height="1" fill="#3a3a3a"/>
<rect x="11" y="234" width="2" height="1" fill="#3a3a3a"/>
<rect x="11" y="243" width="2" height="1" fill="#3a3a3a"/>
<rect x="11" y="263" width="2" height="1" fill="#3a3a3a"/>
<rect x="11" y="272" width="2" height="1" fill="#3a3a3a"/>
<rect x="11" y="282" width="2" height="1" fill="#3a3a3a"/>
<rect x="10" y="291" width="4" height="1" fill="#3a3a3a"/>
<rect x="11" y="301" width="2" height="1" fill="#3a3a3a"/>
<rect x="11" y="311" width="2" height="1" fill="#3a3a3a"/>
<rect x="11" y="320" width="2" height="1" fill="#3a3a3a"/>
<text x="0" y="0" transform="translate(15.5 331) rotate(-90)" text-anchor="middle" font-family="Liberation Sans" font-size="10" fill="#4a4a4a">1</text>
<rect x="11" y="339" width="2" height="1" fill="#3a3a3a"/>
<rect x="11" y="349" width="2" height="1" fill="#3a3a3a"/>
<rect x="11" y="359" width="2" height="1" fill="#3a3a3a"/>
<rect x="10" y="368" width="4" height="1" fill="#3a3a3a"/>
<rect x="11" y="378" width="2" height="1" fill="#3a3a3a"/>
<rect x="11" y="387" width="2" height="1" fill="#3a3a3a"/>
<rect x="11" y="397" width="2" height="1" fill="#3a3a3a"/>
<text x="0" y="0" transform="translate(15.5 408) rotate(-90)" text-anchor="middle" font-family="Liberation Sans" font-size="10" fill="#4a4a4a">2</text>
<rect x="11" y="416" width="2" height="1" fill="#3a3a3a"/>
<rect x="11" y="426" width="2" height="1" fill="#3a3a3a"/>
<rect x="11" y="435" width="2" height="1" fill="#3a3a3a"/>
<rect x="10" y="445" width="4" height="1" fill="#3a3a3a"/>
<rect x="11" y="455" width="2" height="1" fill="#3a3a3a"/>
<rect x="11" y="464" width="2" height="1" fill="#3a3a3a"/>
<rect x="11" y="474" width="2" height="1" fill="#3a3a3a"/>
<text x="0" y="0" transform="translate(15.5 484) rotate(-90)" text-anchor="middle" font-family="Liberation Sans" font-size="10" fill="#4a4a4a">3</text>
<rect x="11" y="493" width="2" height="1" fill="#3a3a3a"/>
<rect x="11" y="503" width="2" height="1" fill="#3a3a3a"/>
<rect x="11" y="512" width="2" height="1" fill="#3a3a3a"/>
<rect x="10" y="522" width="4" height="1" fill="#3a3a3a"/>
<rect x="11" y="531" width="2" height="1" fill="#3a3a3a"/>
<rect x="11" y="541" width="2" height="1" fill="#3a3a3a"/>
<rect x="11" y="551" width="2" height="1" fill="#3a3a3a"/>
<text x="0" y="0" transform="translate(15.5 561) rotate(-90)" text-anchor="middle" font-family="Liberation Sans" font-size="10" fill="#4a4a4a">4</text>
<rect x="11" y="570" width="2" height="1" fill="#3a3a3a"/>
<rect x="11" y="579" width="2" height="1" fill="#3a3a3a"/>
<rect x="11" y="589" width="2" height="1" fill="#3a3a3a"/>
<rect x="10" y="599" width="4" height="1" fill="#3a3a3a"/>
<rect x="11" y="608" width="2" height="1" fill="#3a3a3a"/>
<rect x="11" y="618" width="2" height="1" fill="#3a3a3a"/>
<rect x="11" y="627" width="2" height="1" fill="#3a3a3a"/>
<text x="0" y="0" transform="translate(15.5 638) rotate(-90)" text-anchor="middle" font-family="Liberation Sans" font-size="10" fill="#4a4a4a">5</text>
<rect x="11" y="647" width="2" height="1" fill="#3a3a3a"/>
<rect x="11" y="656" width="2" height="1" fill="#3a3a3a"/>
<rect x="11" y="666" width="2" height="1" fill="#3a3a3a"/>
<rect x="10" y="675" width="4" height="1" fill="#3a3a3a"/>
<rect x="11" y="685" width="2" height="1" fill="#3a3a3a"/>
<rect x="11" y="695" width="2" height="1" fill="#3a3a3a"/>
<rect x="11" y="704" width="2" height="1" fill="#3a3a3a"/>
<text x="0" y="0" transform="translate(15.5 715) rotate(-90)" text-anchor="middle" font-family="Liberation Sans" font-size="10" fill="#4a4a4a">6</text>
<rect x="11" y="723" width="2" height="1" fill="#3a3a3a"/>
<rect x="11" y="733" width="2" height="1" fill="#3a3a3a"/>
<rect x="11" y="743" width="2" height="1" fill="#3a3a3a"/>
<rect x="10" y="752" width="4" height="1" fill="#3a3a3a"/>
<rect x="11" y="762" width="2" height="1" fill="#3a3a3a"/>
<rect x="11" y="771" width="2" height="1" fill="#3a3a3a"/>
<rect x="11" y="781" width="2" height="1" fill="#3a3a3a"/>
<text x="0" y="0" transform="translate(15.5 792) rotate(-90)" text-anchor="middle" font-family="Liberation Sans" font-size="10" fill="#4a4a4a">7</text>
<rect x="11" y="800" width="2" height="1" fill="#3a3a3a"/>
<rect x="11" y="810" width="2" height="1" fill="#3a3a3a"/>
<rect x="11" y="819" width="2" height="1" fill="#3a3a3a"/>
<rect x="10" y="829" width="4" height="1" fill="#3a3a3a"/>
<rect x="11" y="839" width="2" height="1" fill="#3a3a3a"/>
<rect x="11" y="848" width="2" height="1" fill="#3a3a3a"/>
<rect x="11" y="858" width="2" height="1" fill="#3a3a3a"/>
<text x="0" y="0" transform="translate(15.5 868) rotate(-90)" text-anchor="middle" font-family="Liberation Sans" font-size="10" fill="#4a4a4a">8</text>
</svg>
<div id="page" class="a"></div>

<!-- PAGE CONTENT -->
<div class="a" style="left:224px;top:410.5px;font-family:'Liberation Serif';font-style:italic;font-size:16px;line-height:18px;color:#111;white-space:pre;letter-spacing:0.8px">A  service</div>
<svg style="left:224px;top:424px" width="72" height="4"><path d="M0 1 L1.5 2.5 L3 1 L4.5 2.5 L6 1 L7.5 2.5 L9 1 L10.5 2.5 L12 1 L13.5 2.5 L15 1 L16.5 2.5 L18 1 L19.5 2.5 L21 1 L22.5 2.5 L24 1 L25.5 2.5 L27 1 L28.5 2.5 L30 1 L31.5 2.5 L33 1 L34.5 2.5 L36 1 L37.5 2.5 L39 1 L40.5 2.5 L42 1 L43.5 2.5 L45 1 L46.5 2.5 L48 1 L49.5 2.5 L51 1 L52.5 2.5 L54 1 L55.5 2.5 L57 1 L58.5 2.5 L60 1 L61.5 2.5 L63 1 L64.5 2.5 L66 1 L67.5 2.5 L69 1 L70.5 2.5" fill="none" stroke="#3aa03a" stroke-width="0.8"/></svg>
<div class="a" style="left:223px;top:450px;font-family:'Liberation Serif';font-size:27px;line-height:30px;color:#e98d45;white-space:pre;letter-spacing:1.2px;word-spacing:-3px;-webkit-text-stroke:0.3px #e98d45">Requirements Document</div>
<div class="a" style="left:219px;top:523px;width:151px;height:25px;background:#a9b1c9"></div>
<div class="a" style="left:219.5px;top:522px;font-family:'Liberation Serif';font-size:12px;line-height:14px;color:#0d0d35;white-space:pre;letter-spacing:0.17px">&lt;&lt;Start inserting text here&gt;&gt;</div>

<!-- SCROLLBAR -->
<div class="a" style="left:1584px;top:134px;width:16px;height:744px;background:linear-gradient(90deg,#d7dbe1,#e2e5ea 60%,#e0e3e8)"></div>
<div class="a" style="left:1588px;top:139px;width:8px;height:2px;background:#7b8087"></div>
<div class="a" style="left:1584px;top:143px;width:16px;height:16px;border:1px solid #8d939a;background:#e6e8ec"></div>
<svg style="left:1584px;top:143px" width="16" height="16">
 <path d="M3.5 3.5 H8.5 V5.5 H12.5 V12.5 H10.5 V14 H7 V11.5 H3.5 Z" fill="#f0e8ee" stroke="#4f545b" stroke-width="0.9"/>
 <path d="M5 4.5 L6 6.5 L7 4.5" fill="none" stroke="#4f545b" stroke-width="0.8"/>
 <rect x="7" y="8" width="1" height="2" fill="#4f545b"/><rect x="10" y="8" width="1" height="2" fill="#4f545b"/>
 <path d="M7.8 13 L8.8 11 L9.8 13" fill="none" stroke="#4f545b" stroke-width="0.8"/>
</svg>
<svg style="left:1584px;top:160px" width="16" height="12"><path d="M3 9 L12 9 L7.5 4 Z" fill="#494e55"/></svg>
<div class="a" style="left:1584px;top:175px;width:15px;height:520px;border:1px solid #80868e;border-radius:2px;background:linear-gradient(90deg,#f7f8fa,#e9ecf0 60%,#d9dde3)"></div>
<div class="a" style="left:1588px;top:431px;width:8px;height:1px;background:#80858c"></div>
<div class="a" style="left:1588px;top:433px;width:8px;height:1px;background:#80858c"></div>
<div class="a" style="left:1588px;top:435px;width:8px;height:1px;background:#80858c"></div>
<div class="a" style="left:1588px;top:437px;width:8px;height:1px;background:#80858c"></div>
<svg style="left:1584px;top:814px" width="16" height="14"><path d="M3 5 L12 5 L7.5 10 Z" fill="#494e55"/></svg>
<div class="a" style="left:1584px;top:828px;width:16px;height:1px;background:#c3c7cc"></div>
<svg style="left:1584px;top:829px" width="16" height="48">
 <path d="M5.5 6 L8.2 3 L11 6 Z M5.5 9.5 L8.2 6.5 L11 9.5 Z" fill="#3f444b"/>
 <rect x="5.5" y="9.5" width="5.5" height="1" fill="#3f444b"/>
 <circle cx="8.2" cy="23.5" r="3" fill="#d5d8dc" stroke="#5a5f66" stroke-width="0.9"/>
 <path d="M5.5 37.5 L8.2 40.5 L11 37.5 Z M5.5 41 L8.2 44 L11 41 Z" fill="#3f444b"/>
 <rect x="5.5" y="36.5" width="5.5" height="1" fill="#3f444b"/>
</svg>

<div id="status" class="a"></div>
<!-- STATUS BAR -->
<div class="t" style="left:8px;top:882px;color:#333">Page: 1 of 1</div>
<div class="a" style="left:77px;top:879px;width:1px;height:19px;background:#9aa0a7;box-shadow:1px 0 0 #f4f5f7"></div>
<div class="t" style="left:87px;top:882px;color:#333;letter-spacing:0.2px">Words: 4/8</div>
<div class="a" style="left:152px;top:879px;width:1px;height:19px;background:#9aa0a7;box-shadow:1px 0 0 #f4f5f7"></div>
<svg style="left:155px;top:877px" width="26" height="22">
 <path d="M6 10.5 L12.5 7 L21.5 12.5 L12 17.5 Z" fill="#fbfcfe" stroke="#7a7f88" stroke-width="0.8"/>
 <path d="M6 10.5 V12 L12 18.5 L21.5 13.5 V12.5 L12 17.5 Z" fill="#4a6fc0" stroke="#3556a0" stroke-width="0.9"/>
 <path d="M14 3.5 L21 11 M21.5 4 L15 11.5" stroke="#e2452c" stroke-width="2.2" stroke-linecap="round"/>
</svg>
<div class="a" style="left:187px;top:879px;width:1px;height:19px;background:#9aa0a7;box-shadow:1px 0 0 #f4f5f7"></div>
<div class="a" style="left:1328px;top:879px;width:1px;height:19px;background:#9aa0a7;box-shadow:1px 0 0 #f4f5f7"></div>
<div class="a" style="left:1333px;top:879px;width:19px;height:19px;border:1px solid #e0b555;border-radius:3px;background:linear-gradient(#fde9a8,#fbd770)"></div>
<svg style="left:1330px;top:876px" width="100" height="24">
 <rect x="7.5" y="7.5" width="11" height="10" fill="#fff" stroke="#2c2c2c" stroke-width="1.3"/>
 <path d="M9.5 10 H16.5 M9.5 12.5 H16.5 M9.5 15 H16.5" stroke="#2c2c2c" stroke-width="1"/>
 <path d="M26.5 8 H31.5 L32.5 9 L33.5 8 H38.5 V17.5 H34 L32.5 19 L31 17.5 H26.5 Z" fill="#fff" stroke="#4a4a4a" stroke-width="1"/>
 <path d="M32.5 9 V17.5 M28 10.5 H31 M28 12.5 H31 M28 14.5 H31 M34 10.5 H37 M34 12.5 H37 M34 14.5 H37" stroke="#4a4a4a" stroke-width="0.8"/>
 <rect x="43.5" y="7.5" width="10" height="9" fill="#fff" stroke="#4a4a4a" stroke-width="1"/>
 <path d="M45.5 10 H51.5 M45.5 12 H51.5 M45.5 14 H49" stroke="#4a4a4a" stroke-width="0.8"/>
 <circle cx="53.5" cy="16.5" r="3.3" fill="#2f7fc5"/><path d="M51.5 15.5 Q53 14 55 15.5 M52 17.5 Q54 19 55.5 17" stroke="#5fb65a" stroke-width="1" fill="none"/>
 <path d="M63 8.5 H65 M66 8.5 H72 M65 11 H72 M65 13.5 H72 M63 16 H65 M66 16 H72 M65 18.5 H72" stroke="#555" stroke-width="1"/>
 <path d="M81 8.5 H91 M81 10.5 H91 M81 12.5 H91 M81 14.5 H91 M81 16.5 H91 M81 18.5 H91" stroke="#555" stroke-width="1"/>
</svg>
<div class="t" style="left:1434px;top:882px;color:#333">80%</div>
<svg style="left:1460px;top:878px" width="140" height="22">
 <defs><linearGradient id="zb" x1="0" y1="0" x2="0" y2="1"><stop offset="0" stop-color="#ffffff"/><stop offset="1" stop-color="#dfe2e6"/></linearGradient></defs>
 <path d="M20 10.5 H120" stroke="#8d9299" stroke-width="1"/>
 <path d="M20 11.5 H120" stroke="#f6f7f8" stroke-width="1"/>
 <rect x="70" y="6" width="1" height="8" fill="#9aa0a7"/>
 <circle cx="12" cy="10.5" r="7.3" fill="url(#zb)" stroke="#777c83" stroke-width="1"/>
 <rect x="8" y="9.5" width="8" height="2.2" fill="#3f444b"/>
 <circle cx="128" cy="10.5" r="7.3" fill="url(#zb)" stroke="#777c83" stroke-width="1"/>
 <rect x="124" y="9.5" width="8" height="2.2" fill="#3f444b"/>
 <rect x="127" y="6.5" width="2.2" height="8" fill="#3f444b"/>
 <path d="M56.5 3.5 H65 V12 L60.75 16 L56.5 12 Z" fill="#f7f8fa" stroke="#6d737a" stroke-width="1"/>
</svg>

</body></html>
